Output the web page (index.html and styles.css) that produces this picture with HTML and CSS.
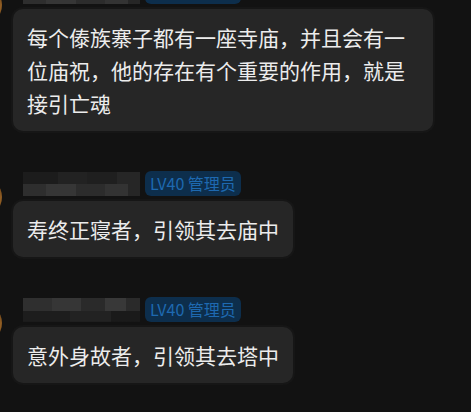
FILE: index.html
```html
<!DOCTYPE html>
<html lang="zh-CN">
<head>
  <meta charset="UTF-8">
  <meta name="viewport" content="width=device-width, initial-scale=1.0">
  <title>评论</title>
  <link rel="stylesheet" href="styles.css">
</head>
<body>
  <div class="feed">
    <div class="msg">
      <div class="avatar"></div>
      <div class="body">
        <div class="meta">
          <span class="name"></span>
          <span class="badge">LV40 管理员</span>
        </div>
        <div class="bubble bubble-wide">每个傣族寨子都有一座寺庙，并且会有一位庙祝，他的存在有个重要的作用，就是接引亡魂</div>
      </div>
    </div>

    <div class="msg">
      <div class="avatar"></div>
      <div class="body">
        <div class="meta">
          <span class="name"></span>
          <span class="badge">LV40 管理员</span>
        </div>
        <div class="bubble">寿终正寝者，引领其去庙中</div>
      </div>
    </div>

    <div class="msg">
      <div class="avatar"></div>
      <div class="body">
        <div class="meta">
          <span class="name name-alt"></span>
          <span class="badge">LV40 管理员</span>
        </div>
        <div class="bubble">意外身故者，引领其去塔中</div>
      </div>
    </div>
  </div>
</body>
</html>
```

FILE: styles.css
```css
html, body {
  margin: 0;
  background: #121212;
  height: 100%;
  overflow: hidden;
}
body {
  font-family: "Noto Sans CJK SC", "Noto Sans", sans-serif;
  color: #ececec;
}
.feed {
  margin-top: -21px;
  margin-left: -38px;
}
.msg {
  display: flex;
  gap: 11px;
  margin-bottom: 40px;
}
.avatar {
  flex: none;
  width: 40px;
  height: 40px;
  margin-top: 6px;
  border-radius: 50%;
  background: radial-gradient(circle at 90% 55%, #9a6426, #4a2a0c 60%, #1a1a1a);
}
.body {
  display: flex;
  flex-direction: column;
  align-items: flex-start;
  gap: 5px;
}
.meta {
  display: flex;
  align-items: center;
  gap: 5px;
  height: 25px;
}
/* pixelated nickname */
.name {
  display: block;
  width: 117px;
  height: 24px;
  margin-left: 10px;
  background:
    linear-gradient(90deg, #1c1c1c 0 30%, #222 30% 55%, #1f1f1f 55% 80%, #262626 80%) top / 100% 50% no-repeat,
    linear-gradient(90deg, #2e2e2e 0 20%, #363636 20% 45%, #2c2c2c 45% 70%, #333 70% 90%, #262626 90%) bottom / 100% 50% no-repeat;
}
.name-alt {
  background:
    linear-gradient(90deg, #2f2f2f 0 25%, #363636 25% 50%, #2a2a2a 50% 70%, #383838 70% 88%, #2a2a2a 88%) top / 100% 55% no-repeat,
    linear-gradient(90deg, #1d1d1d 0 40%, #222 40% 75%, #1a1a1a 75%) bottom / 100% 45% no-repeat;
}
.badge {
  display: block;
  height: 25px;
  line-height: 25px;
  padding: 0 5px;
  border-radius: 6px;
  background: #0d2e4c;
  color: #1e69b0;
  font-size: 16px;
  white-space: nowrap;
}
.bubble {
  box-sizing: border-box;
  max-width: 420px;
  padding: 12px 14px 11px;
  border-radius: 10px;
  background: #262626;
  box-shadow: 0 0 0 2px #161616;
  font-size: 21px;
  line-height: 33px;
}
.bubble-wide {
  width: 420px;
}
```
